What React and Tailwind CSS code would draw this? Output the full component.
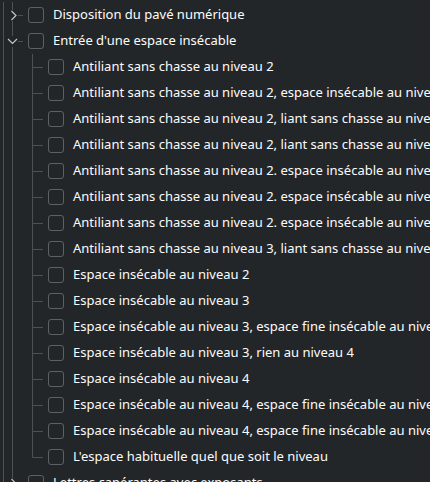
const LINE = '#4d5156';
const CHEV = '#c3c5c7';

const items = [
  { label: 'Disposition du pavé numérique', level: 0, chevron: 'right' },
  { label: "Entrée d'une espace insécable", level: 0, chevron: 'down' },
  { label: 'Antiliant sans chasse au niveau 2', level: 1 },
  { label: 'Antiliant sans chasse au niveau 2, espace insécable au niveau 3', level: 1 },
  { label: 'Antiliant sans chasse au niveau 2, liant sans chasse au niveau 3', level: 1 },
  { label: 'Antiliant sans chasse au niveau 2, liant sans chasse au niveau 4', level: 1 },
  { label: 'Antiliant sans chasse au niveau 2. espace insécable au niveau 3', level: 1 },
  { label: 'Antiliant sans chasse au niveau 2. espace insécable au niveau 3', level: 1 },
  { label: 'Antiliant sans chasse au niveau 2. espace insécable au niveau 4', level: 1 },
  { label: 'Antiliant sans chasse au niveau 3, liant sans chasse au niveau 4', level: 1 },
  { label: 'Espace insécable au niveau 2', level: 1 },
  { label: 'Espace insécable au niveau 3', level: 1 },
  { label: 'Espace insécable au niveau 3, espace fine insécable au niveau 4', level: 1 },
  { label: 'Espace insécable au niveau 3, rien au niveau 4', level: 1 },
  { label: 'Espace insécable au niveau 4', level: 1 },
  { label: 'Espace insécable au niveau 4, espace fine insécable au niveau 3', level: 1 },
  { label: 'Espace insécable au niveau 4, espace fine insécable au niveau 3', level: 1 },
  { label: "L'espace habituelle quel que soit le niveau", level: 1, last: true },
  { label: 'Lettres capérantes avec exposants', level: 0, chevron: 'right' },
];

const Gutter = ({ item }) => {
  if (item.level === 0) {
    return (
      <svg width="28" height="26" className="shrink-0">
        <line x1="3.5" y1="0" x2="3.5" y2="26" stroke={LINE} />
        <line x1="12.5" y1="0" x2="12.5" y2="8" stroke={LINE} />
        <line x1="12.5" y1="19" x2="12.5" y2="26" stroke={LINE} />
        <line x1="18" y1="13.5" x2="23" y2="13.5" stroke={LINE} />
        {item.chevron === 'right' ? (
          <polyline points="11.5,9 16,13.5 11.5,18" fill="none" stroke={CHEV} strokeWidth="1.2" />
        ) : (
          <polyline points="8,11 12.5,15.5 17,11" fill="none" stroke={CHEV} strokeWidth="1.2" />
        )}
      </svg>
    );
  }
  return (
    <svg width="48" height="26" className="shrink-0">
      <line x1="3.5" y1="0" x2="3.5" y2="26" stroke={LINE} />
      <line x1="12.5" y1="0" x2="12.5" y2="26" stroke={LINE} />
      <line x1="32.5" y1="0" x2="32.5" y2={item.last ? 13.5 : 26} stroke={LINE} />
      <line x1="32.5" y1="13.5" x2="43" y2="13.5" stroke={LINE} />
    </svg>
  );
};

const Row = ({ item }) => (
  <div className="flex items-center h-[26px]">
    <Gutter item={item} />
    <span className="shrink-0 w-4 h-4 rounded-[3px] border border-[#5d6166]" />
    <span className="ml-[9px] whitespace-nowrap text-[13px] text-[#fcfcfc]">{item.label}</span>
  </div>
);

export default function App() {
  return (
    <div className="w-[430px] h-[482px] overflow-hidden bg-[#232629] font-['Noto_Sans',sans-serif]">
      <div className="pt-[2px]">
        {items.map((item, i) => (
          <Row key={i} item={item} />
        ))}
      </div>
    </div>
  );
}
